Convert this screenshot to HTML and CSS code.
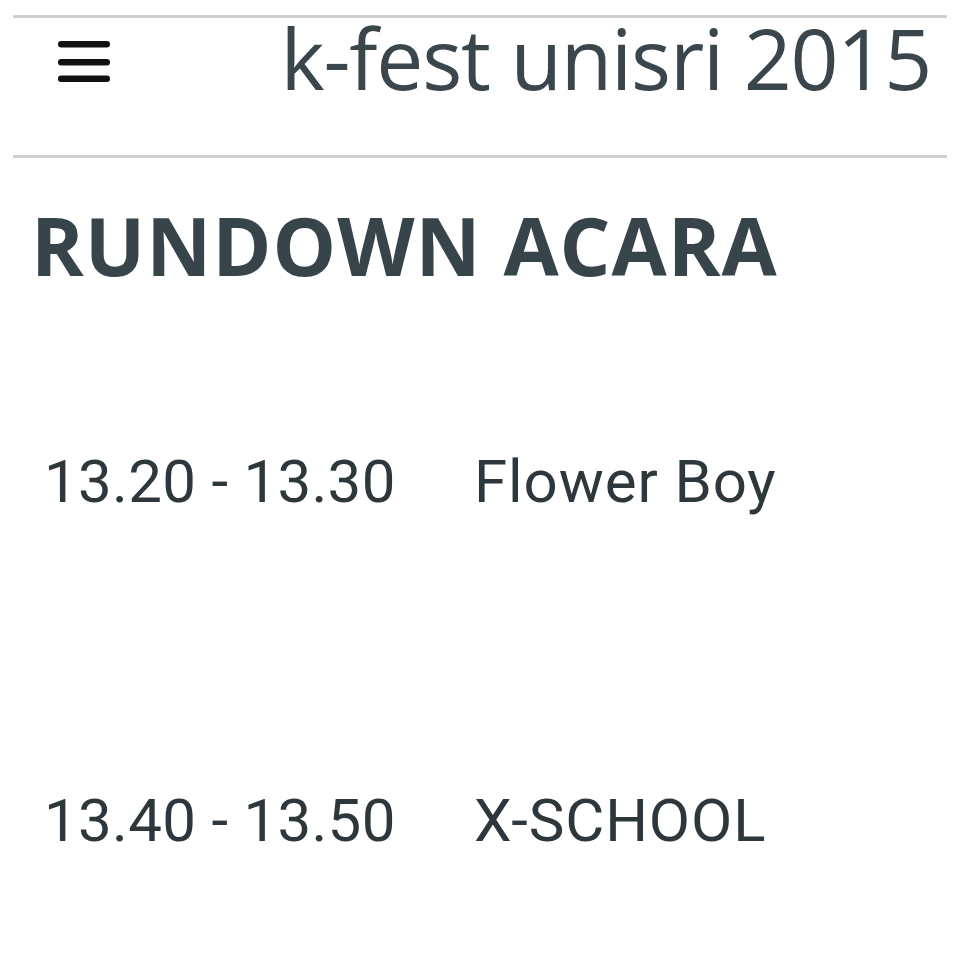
FILE: index.html
```html
<!DOCTYPE html>
<html lang="id">
<head>
<meta charset="utf-8">
<title>k-fest unisri 2015</title>
<link rel="stylesheet" href="styles.css">
</head>
<body>
<div class="page">
  <header class="topbar">
    <button class="menu" aria-label="Menu">
      <svg width="54" height="42" viewBox="0 0 54 42">
        <rect x="0" y="0" width="52" height="6.5" rx="3.2" fill="#111"/>
        <rect x="0" y="18" width="52" height="6.5" rx="3.2" fill="#111"/>
        <rect x="0" y="34.5" width="52" height="6.5" rx="3.2" fill="#111"/>
      </svg>
    </button>
    <div class="site-title">k-fest unisri 2015</div>
  </header>
  <h1 class="heading">RUNDOWN ACARA</h1>
  <div class="rundown">
    <div class="row row-first"><span class="time">13.20 - 13.30</span><span class="act">Flower Boy</span></div>
    <div class="row row-second"><span class="time">13.40 - 13.50</span><span class="act">X-SCHOOL</span></div>
  </div>
</div>
</body>
</html>
```

FILE: styles.css
```css
html, body {
  margin: 0;
  padding: 0;
  background: #ffffff;
}
.page {
  width: 934px;
  margin: 0 0 0 13px;
  padding-top: 15px;
}
.topbar {
  height: 137px;
  border-top: 3px solid #cdd1d2;
  border-bottom: 3px solid #cdd1d2;
  display: flex;
  align-items: flex-start;
}
.menu {
  background: none;
  border: 0;
  padding: 0;
  margin: 23px 0 0 45px;
  display: block;
}
.menu svg { display: block; }
.site-title {
  margin-left: auto;
  margin-right: 16px;
  margin-top: -18px;
  font-family: "Open Sans", sans-serif;
  font-size: 84px;
  line-height: normal;
  color: #3a464b;
  letter-spacing: -1.2px;
  white-space: nowrap;
}
.heading {
  margin: 47px 0 0 18px;
  font-family: "Open Sans", sans-serif;
  font-weight: 700;
  font-size: 80px;
  line-height: 1;
  color: #37444a;
  letter-spacing: 1px;
}
.rundown {
  display: flex;
  flex-direction: column;
}
.row {
  display: grid;
  grid-template-columns: 430px auto;
  padding-left: 31px;
  font-family: Roboto, sans-serif;
  font-size: 60px;
  line-height: 1;
  color: #2e373b;
}
.time { letter-spacing: 0.3px; }
.act { letter-spacing: 0.9px; }
.row-first { margin-top: 167px; }
.row-second { margin-top: 279px; }
```
